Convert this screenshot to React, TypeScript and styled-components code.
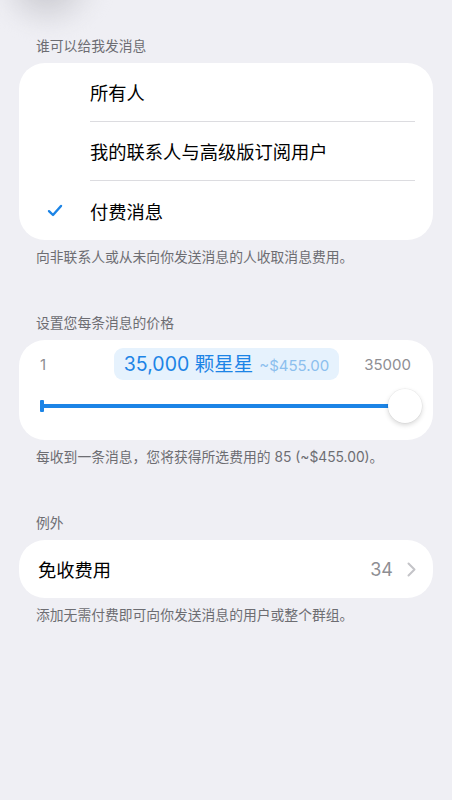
import React from "react";
import styled, { createGlobalStyle } from "styled-components";

const GlobalStyle = createGlobalStyle`
  html, body {
    margin: 0;
    padding: 0;
    background: #efeff4;
  }
  body {
    font-family: "Inter", "Noto Sans CJK SC", sans-serif;
    -webkit-font-smoothing: antialiased;
  }
`;

const options = [
  { label: "所有人", checked: false },
  { label: "我的联系人与高级版订阅用户", checked: false },
  { label: "付费消息", checked: true },
];

const CheckIcon = () => (
  <svg width="16" height="13" viewBox="0 0 16 13" fill="none">
    <path
      d="M2 7.2 L6 11 L14 2"
      stroke="#1c84e6"
      strokeWidth="2.4"
      strokeLinecap="round"
      strokeLinejoin="round"
    />
  </svg>
);

const Chevron = () => (
  <svg width="9" height="15" viewBox="0 0 9 15" fill="none">
    <path
      d="M1.5 1.5 L7.5 7.5 L1.5 13.5"
      stroke="#c4c4c8"
      strokeWidth="2"
      strokeLinecap="round"
      strokeLinejoin="round"
    />
  </svg>
);

const App = () => (
  <>
    <GlobalStyle />
    <Page>
      <Blur />
      <Section>
        <Header>谁可以给我发消息</Header>
        <Card>
          {options.map((o, i) => (
            <OptionRow key={o.label}>
              <CheckCell>{o.checked && <CheckIcon />}</CheckCell>
              <OptionLabel last={i === options.length - 1}>{o.label}</OptionLabel>
            </OptionRow>
          ))}
        </Card>
        <Footer>向非联系人或从未向你发送消息的人收取消息费用。</Footer>
      </Section>

      <Section>
        <Header>设置您每条消息的价格</Header>
        <PriceCard>
          <PriceTop>
            <Bound>1</Bound>
            <PricePill>
              <PriceValue>35,000 颗星星</PriceValue>
              <PriceUsd>~$455.00</PriceUsd>
            </PricePill>
            <Bound align="end">35000</Bound>
          </PriceTop>
          <Slider>
            <Tick />
            <Track />
            <Knob />
          </Slider>
        </PriceCard>
        <Footer>每收到一条消息，您将获得所选费用的 85 (~$455.00)。</Footer>
      </Section>

      <Section>
        <Header>例外</Header>
        <Card>
          <LinkRow>
            <LinkLabel>免收费用</LinkLabel>
            <LinkValue>34</LinkValue>
            <Chevron />
          </LinkRow>
        </Card>
        <Footer>添加无需付费即可向你发送消息的用户或整个群组。</Footer>
      </Section>
    </Page>
  </>
);

export default App;

const Page = styled.div`
  position: relative;
  min-height: 800px;
  box-sizing: border-box;
  padding: 37px 19px 0;
  overflow: hidden;
`;

const Blur = styled.div`
  position: absolute;
  left: -10px;
  top: -70px;
  width: 115px;
  height: 100px;
  border-radius: 50%;
  background: radial-gradient(circle, rgba(190, 190, 196, 0.9) 0%, rgba(220, 220, 226, 0.5) 55%, rgba(239, 239, 244, 0) 75%);
  filter: blur(7px);
`;

const Section = styled.section`
  margin-bottom: 48px;
`;

const Header = styled.div`
  padding-left: 17px;
  font-size: 13.8px;
  line-height: 18px;
  color: #6d6d72;
  margin-bottom: 8px;
`;

const Footer = styled.div`
  padding-left: 17px;
  font-size: 13.8px;
  line-height: 18px;
  color: #6d6d72;
  margin-top: 8px;
`;

const Card = styled.div`
  background: #ffffff;
  border-radius: 26px;
  overflow: hidden;
`;

const OptionRow = styled.div`
  display: flex;
  height: 59px;
`;

const CheckCell = styled.div`
  width: 71px;
  flex-shrink: 0;
  display: flex;
  align-items: center;
  justify-content: center;
  padding-left: 1px;
  box-sizing: border-box;
`;

const OptionLabel = styled.div<{ last?: boolean }>`
  flex: 1;
  margin-right: 18px;
  display: flex;
  align-items: center;
  font-size: 18.3px;
  color: #000;
  border-bottom: ${(p) => (p.last ? "none" : "1px solid #dcdce0")};
`;

const PriceCard = styled(Card)`
  padding: 8px 11px 17px 21px;
`;

const PriceTop = styled.div`
  display: grid;
  grid-template-columns: 1fr auto 1fr;
  align-items: center;
  height: 32px;
  padding-right: 11px;
`;

const Bound = styled.div<{ align?: string }>`
  justify-self: ${(p) => p.align || "start"};
  font-size: 15px;
  color: #8e8e93;
`;

const PricePill = styled.div`
  display: flex;
  align-items: baseline;
  gap: 6px;
  height: 32px;
  box-sizing: border-box;
  padding: 0 10px;
  border-radius: 9px;
  background: #e6f2fd;
  line-height: 32px;
  margin-left: 2px;
`;

const PriceValue = styled.span`
  font-size: 19.5px;
  color: #1c84e6;
`;

const PriceUsd = styled.span`
  font-size: 15px;
  color: #8cbfee;
`;

const Slider = styled.div`
  display: flex;
  align-items: center;
  height: 35px;
  margin-top: 8px;
`;

const Tick = styled.div`
  width: 4px;
  height: 12px;
  border-radius: 1px;
  background: #1c84e6;
  flex-shrink: 0;
`;

const Track = styled.div`
  flex: 1;
  height: 4px;
  background: #1c84e6;
`;

const Knob = styled.div`
  width: 34px;
  height: 34px;
  flex-shrink: 0;
  border-radius: 50%;
  background: #fff;
  box-shadow: 0 2px 5px rgba(0, 0, 0, 0.16), 0 0 0 0.5px rgba(0, 0, 0, 0.06);
  margin-left: -6px;
`;

const LinkRow = styled.div`
  display: flex;
  align-items: center;
  height: 58px;
  padding: 0 17px 0 19px;
`;

const LinkLabel = styled.div`
  flex: 1;
  font-size: 18.3px;
  color: #000;
`;

const LinkValue = styled.div`
  font-size: 18px;
  color: #8e8e93;
  margin-right: 14px;
`;
